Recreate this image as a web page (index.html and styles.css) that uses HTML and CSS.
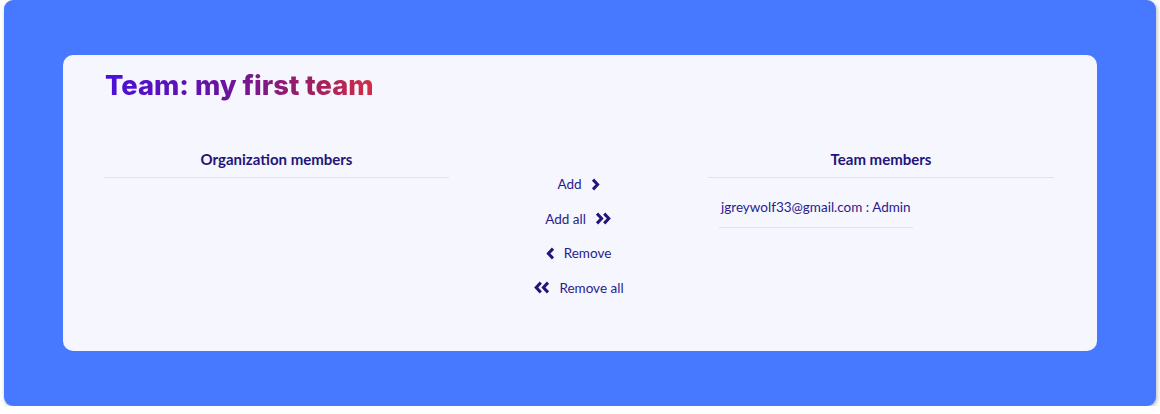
FILE: index.html
```html
<!DOCTYPE html>
<html lang="en">
<head>
<meta charset="utf-8">
<title>Team: my first team</title>
<link rel="stylesheet" href="styles.css">
</head>
<body>
<div class="panel">
  <div class="card">
    <h1 class="title">Team: my first team</h1>
    <div class="lists">
      <section class="col">
        <h2 class="col-head">Organization members</h2>
      </section>
      <div class="actions">
        <button class="act">Add <svg class="ico" viewBox="0 0 9 13" width="9" height="13"><path d="M2 1.6 L6.6 6.5 L2 11.4"/></svg></button>
        <button class="act">Add all <svg class="ico" viewBox="0 0 17 13" width="17" height="13"><path d="M2 1.6 L6.6 6.5 L2 11.4 M9.2 1.6 L13.8 6.5 L9.2 11.4"/></svg></button>
        <button class="act"><svg class="ico" viewBox="0 0 9 13" width="9" height="13"><path d="M7 1.6 L2.4 6.5 L7 11.4"/></svg> Remove</button>
        <button class="act"><svg class="ico" viewBox="0 0 17 13" width="17" height="13"><path d="M7.8 1.6 L3.2 6.5 L7.8 11.4 M15 1.6 L10.4 6.5 L15 11.4"/></svg> Remove all</button>
      </div>
      <section class="col">
        <h2 class="col-head">Team members</h2>
        <ul class="members">
          <li class="member">jgreywolf33@gmail.com : Admin</li>
        </ul>
      </section>
    </div>
  </div>
</div>
</body>
</html>
```

FILE: styles.css
```css
html, body {
  margin: 0;
  padding: 0;
  background: #ffffff;
}
body {
  font-family: Lato, "Open Sans", "Liberation Sans", sans-serif;
  color: #2a1c8c;
}
.panel {
  margin-left: 4px;
  width: 1152px;
  height: 406px;
  box-sizing: border-box;
  padding: 55px 59px 0 59px;
  background: #4679ff;
  border-radius: 9px;
  box-shadow: 1px 2px 4px rgba(0, 0, 0, 0.28);
}
.card {
  height: 296px;
  box-sizing: border-box;
  background: #f5f6fe;
  border-radius: 10px;
  padding: 14px 43px 0 41px;
}
.title {
  margin: 0 0 0 1px;
  font-family: Inter, "Noto Sans", sans-serif;
  font-weight: 800;
  font-size: 27.3px;
  line-height: 34px;
  letter-spacing: 0;
  display: inline-block;
  background: linear-gradient(90deg, #4a10dc 0%, #6a149f 45%, #a0205e 78%, #d42e46 100%);
  -webkit-background-clip: text;
  background-clip: text;
  color: transparent;
}
.lists {
  margin-top: 46px;
  display: grid;
  grid-template-columns: 345px 1fr 346px;
}
.col-head {
  margin: 0;
  font-size: 15px;
  line-height: 20px;
  font-weight: 700;
  color: #22157a;
  text-align: center;
  padding-bottom: 8px;
  border-bottom: 1px solid #e2e3ec;
}
.actions {
  padding-top: 25px;
  display: flex;
  flex-direction: column;
  align-items: center;
  gap: 14.5px;
}
.act {
  border: 0;
  background: none;
  padding: 0;
  font: inherit;
  font-size: 13.5px;
  line-height: 20px;
  color: #2a1c8c;
  display: flex;
  align-items: center;
  gap: 9px;
  cursor: pointer;
}
.ico path {
  fill: none;
  stroke: #22157a;
  stroke-width: 3;
  stroke-linejoin: miter;
}
.members {
  list-style: none;
  margin: 18px 0 0 11px;
  padding: 0;
}
.member {
  display: inline-block;
  font-size: 13.5px;
  line-height: 20px;
  padding: 0 2px 10px 2px;
  border-bottom: 1px solid #e2e3ec;
  color: #2a1c8c;
}
```
